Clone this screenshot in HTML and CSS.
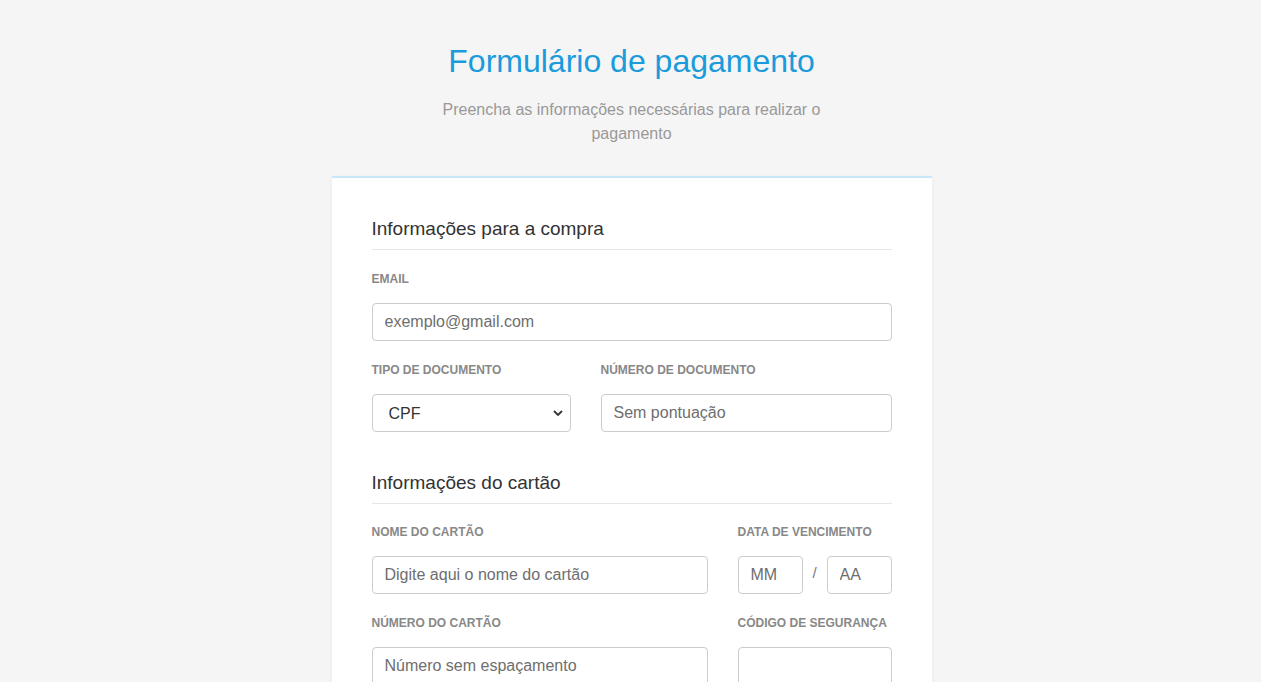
FILE: index.html
```html
<!DOCTYPE html>
<html lang="pt-BR">
<head>
<meta charset="utf-8">
<title>Formulário de pagamento</title>
<link rel="stylesheet" href="styles.css">
</head>
<body>
<header class="page-header">
  <h1 class="page-title">Formulário de pagamento</h1>
  <p class="page-subtitle">Preencha as informações necessárias para realizar o pagamento</p>
</header>
<main class="card">
  <section class="section">
    <h2 class="section-title">Informações para a compra</h2>
    <div class="field">
      <label class="label" for="email">EMAIL</label>
      <input class="input" id="email" type="email" placeholder="exemplo@gmail.com">
    </div>
    <div class="row row-doc">
      <div class="field">
        <label class="label" for="doctype">TIPO DE DOCUMENTO</label>
        <div class="select-wrap">
          <select class="input select" id="doctype">
            <option>CPF</option>
            <option>CNPJ</option>
          </select>
          <svg class="chevron" width="10" height="6" viewBox="0 0 10 6"><path d="M1 1 L5 5 L9 1" fill="none" stroke="#333" stroke-width="1.8"/></svg>
        </div>
      </div>
      <div class="field">
        <label class="label" for="docnum">NÚMERO DE DOCUMENTO</label>
        <input class="input" id="docnum" type="text" placeholder="Sem pontuação">
      </div>
    </div>
  </section>
  <section class="section section-card">
    <h2 class="section-title">Informações do cartão</h2>
    <div class="row row-card row-first">
      <div class="field">
        <label class="label" for="cardname">NOME DO CARTÃO</label>
        <input class="input" id="cardname" type="text" placeholder="Digite aqui o nome do cartão">
      </div>
      <div class="field">
        <label class="label">DATA DE VENCIMENTO</label>
        <div class="date">
          <input class="input" type="text" placeholder="MM">
          <span class="slash">/</span>
          <input class="input" type="text" placeholder="AA">
        </div>
      </div>
    </div>
    <div class="row row-card">
      <div class="field">
        <label class="label" for="cardnum">NÚMERO DO CARTÃO</label>
        <input class="input" id="cardnum" type="text" placeholder="Número sem espaçamento">
      </div>
      <div class="field">
        <label class="label" for="cvv">CÓDIGO DE SEGURANÇA</label>
        <input class="input" id="cvv" type="text">
      </div>
    </div>
  </section>
</main>
</body>
</html>
```
FILE: styles.css
```css
* { box-sizing: border-box; }

body {
  margin: 0;
  padding-left: 2px;
  background: #f5f5f5;
  font-family: "Liberation Sans", Arial, Helvetica, sans-serif;
  color: #333;
}

.page-header {
  text-align: center;
  padding-top: 43px;
}

.page-title {
  margin: 0;
  font-size: 32px;
  line-height: 36px;
  font-weight: 400;
  color: #1a9bdb;
}

.page-subtitle {
  margin: 19px auto 0;
  max-width: 400px;
  font-size: 16px;
  line-height: 24px;
  color: #999;
}

.card {
  width: 600px;
  margin: 30px auto 40px;
  padding: 39px 40px 60px;
  background: #fff;
  border-top: 2px solid #c9e7f6;
  box-shadow: 0 1px 4px rgba(0, 0, 0, 0.06);
}

.section-card { margin-top: 39px; }

.section-title {
  margin: 0;
  font-size: 19px;
  line-height: 24px;
  font-weight: 400;
  color: #333;
  padding-bottom: 8px;
  border-bottom: 1px solid #e6e6e6;
}

.field {
  display: flex;
  flex-direction: column;
  margin-top: 20px;
  min-width: 0;
}

.row .field { margin-top: 0; }

.row { margin-top: 20px; display: grid; }
.row-first { margin-top: 19px; }
.row-doc { grid-template-columns: 199px 1fr; column-gap: 30px; }
.row-card { grid-template-columns: 336px 1fr; column-gap: 30px; }

.label {
  font-size: 12px;
  line-height: 16px;
  font-weight: 700;
  color: #888;
  padding-top: 1px;
  margin-bottom: 16px;
}

.input {
  width: 100%;
  height: 38px;
  border: 1px solid #ccc;
  border-radius: 4px;
  padding: 0 12px;
  font-family: inherit;
  font-size: 16px;
  color: #555;
  background: #fff;
  outline: none;
}

.input::placeholder { color: #6e6e6e; opacity: 1; }

.select-wrap { position: relative; }

.select {
  appearance: none;
  -webkit-appearance: none;
  padding-left: 16px;
  color: #333;
}

.chevron {
  position: absolute;
  right: 8px;
  top: 16px;
  pointer-events: none;
}

.date {
  display: flex;
  align-items: center;
}

.date .input { flex: 1; min-width: 0; }

.slash {
  width: 24px;
  text-align: center;
  font-size: 15px;
  color: #777;
  margin-top: -6px;
}
```
